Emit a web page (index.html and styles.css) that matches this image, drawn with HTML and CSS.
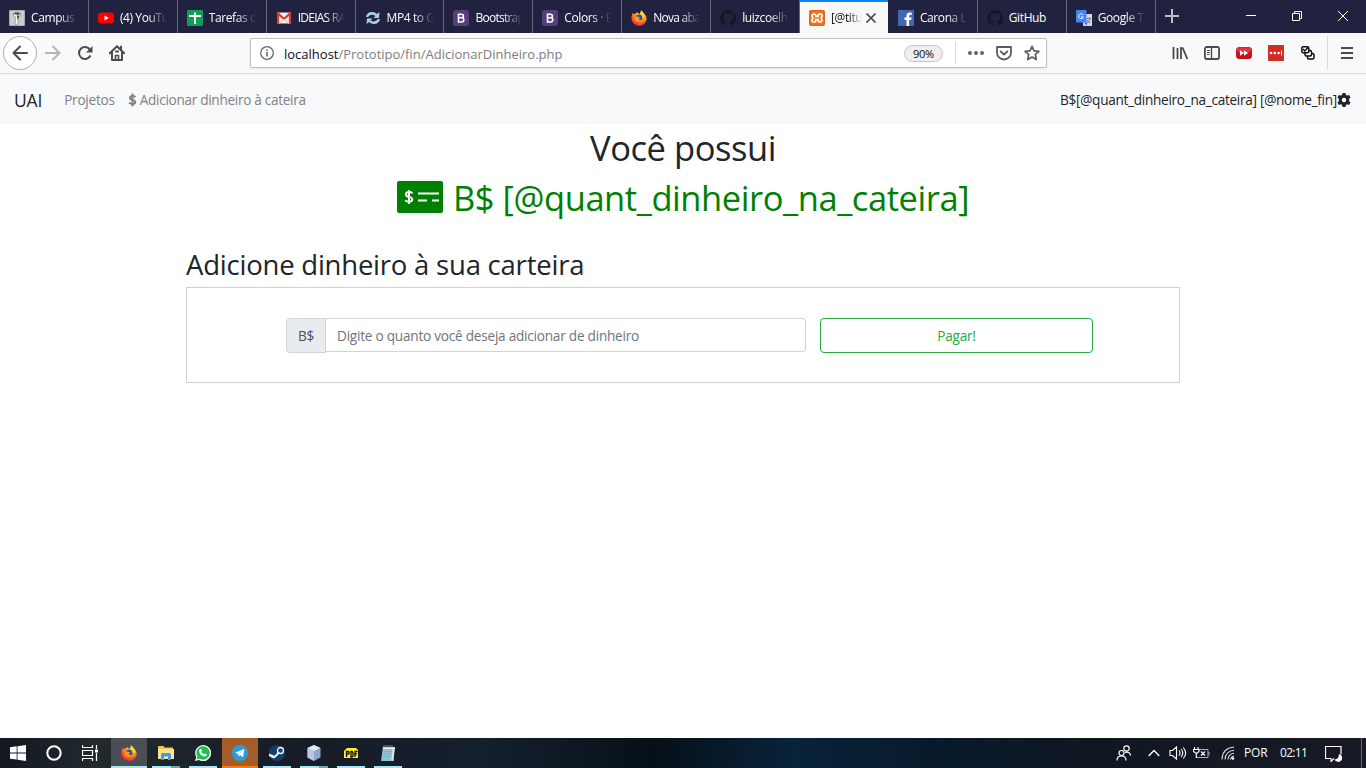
FILE: index.html
```html
<!DOCTYPE html>
<html lang="pt-BR">
<head>
<meta charset="utf-8">
<title>Adicionar dinheiro</title>
<link rel="stylesheet" href="styles.css">
</head>
<body>
<header class="tabs">
  <div class="tab"><svg class="fav" viewBox="0 0 16 16"><rect width="16" height="16" rx="1" fill="#aaa"/><rect x="1" y="1" width="14" height="14" fill="#ccc"/><path d="M4 4q4-3.500 8 0l-1 2-1.500.5-.5 7-2 1.500-1-1 .5-7L4.500 6z" fill="#f4f4f4" stroke="#777" stroke-width=".6"/><path d="M4 4q4-3.500 8 0L8.500 5z" fill="#555"/><path d="M8 5.500h2L8.700 10z" fill="#222"/></svg><span class="tt">Campus</span></div>
  <div class="tab"><svg class="fav" viewBox="0 0 16 16"><rect y="2.500" width="16" height="11" rx="3" fill="#f00"/><path d="M6.500 5.500v5L10.800 8z" fill="#fff"/></svg><span class="tt">(4) YouTu</span></div>
  <div class="tab"><svg class="fav" viewBox="0 0 16 16"><rect width="16" height="16" rx="1" fill="#0f9d58"/><path d="M7 2.500h2V5h5v2H9v7H7V7H2V5h5z" fill="#fff"/></svg><span class="tt">Tarefas d</span></div>
  <div class="tab"><svg class="fav" viewBox="0 0 16 16"><rect x="1.500" y="2.500" width="13" height="11" fill="#eee"/><path d="M2 13.500v-10L8 9l6-5.500v10" fill="none" stroke="#d93a2f" stroke-width="2.200"/><path d="M3.500 13.500 8 9l4.500 4.500" fill="none" stroke="#ccc"/></svg><span class="tt snug">IDEIAS RA</span></div>
  <div class="tab"><svg class="fav" viewBox="0 0 16 16"><path d="M1 7q1-5 6-5 3 0 5 2l2.500-2L14 8H8.500l2-2Q6 3 3 7zM15 9q-1 5-6 5-3 0-5-2l-2.500 2L2 8.500h5.500l-2 2Q10 13 13 9z" fill="#a9cdec"/></svg><span class="tt">MP4 to G</span></div>
  <div class="tab"><svg class="fav" viewBox="0 0 16 16"><use href="#boot"/></svg><span class="tt snug">Bootstrap</span></div>
  <div class="tab"><svg class="fav" viewBox="0 0 16 16"><use href="#boot"/></svg><span class="tt">Colors · B</span></div>
  <div class="tab"><svg class="fav" viewBox="0 0 16 16"><use href="#firefox"/></svg><span class="tt snug">Nova aba</span></div>
  <div class="tab"><svg class="fav" viewBox="0 0 16 16"><use href="#github"/></svg><span class="tt">luizcoelh</span></div>
  <div class="tab active"><svg class="fav" viewBox="0 0 16 16"><rect width="16" height="16" rx="2" fill="#f37623"/><rect x=".8" y=".8" width="14.400" height="14.400" rx="1.500" fill="none" stroke="#d2560c" stroke-width=".6"/><path d="M4.800 4Q7 4 7 6.500h2Q9 4 11.200 4T13 6t-1.500 2q1.500.3 1.500 2t-1.800 2Q9 12 9 9.500H7Q7 12 4.800 12T3 10t1.500-2Q3 7.700 3 6t1.800-2z" fill="none" stroke="#fff" stroke-width="1.700"/></svg><span class="tt">[@titu</span><svg class="close" viewBox="0 0 12 12"><path d="m1.500 1.500 9 9m0-9-9 9" stroke="#444" stroke-width="1.700"/></svg></div>
  <div class="tab"><svg class="fav" viewBox="0 0 16 16"><rect width="16" height="16" fill="#4267b2"/><path d="M8.500 16v-6H6.500V7.600h2V6q0-3.400 3.200-3.400h2V5h-1.300q-1.300 0-1.300 1.300v1.300h2.500L13.200 10h-2.100v6z" fill="#fff"/></svg><span class="tt">Carona L</span></div>
  <div class="tab"><svg class="fav" viewBox="0 0 16 16"><use href="#github"/></svg><span class="tt full">GitHub</span></div>
  <div class="tab last"><svg class="fav" viewBox="0 0 16 16"><rect x="7" y="4" width="9.500" height="12" rx="1" fill="#d5d9dd"/><rect width="10.500" height="12.500" rx="1" fill="#4285f4"/><path d="m8 12.500 2.500 3 1-3z" fill="#3367d6"/><path d="M7.200 5.200A2.400 2.400 0 1 0 7.300 7H5" fill="none" stroke="#fff"/><path d="M10.800 8.500H15M13 7.500v1M14.200 8.500q-.8 3-3 4.500m0-3q1 2 3 3" fill="none" stroke="#62757f" stroke-width=".9"/></svg><span class="tt">Google T</span></div>
  <svg class="plus" viewBox="0 0 14 14"><path d="M7 0v14M0 7h14" stroke="#bbbcc8" stroke-width="2"/></svg>
  <div class="wctl">
    <svg viewBox="0 0 12 12"><path d="M1 5.500h10" stroke="#fff"/></svg>
    <svg viewBox="0 0 12 12"><path d="M3.500 3.500v-2h7v7h-2M1.500 3.500h7v7h-7z" fill="none" stroke="#fff"/></svg>
    <svg viewBox="0 0 12 12"><path d="m1 1 10 10m0-10L1 11" stroke="#fff"/></svg>
  </div>
</header>

<div class="toolbar">
  <span class="back"><svg viewBox="0 0 16 16"><path d="M15 8H1.500M8 1.500 1.500 8 8 14.500" /></svg></span>
  <svg class="ic fwd" viewBox="0 0 16 16"><path d="M0 8h14.500M8 1.500 14.500 8 8 14.500"/></svg>
  <svg class="ic reload" viewBox="0 0 16 16"><path d="M13 4.600A6 6 0 1 0 13.500 10.500" /><path d="M15.500 1v6.500H9z" fill="#4a4a4f" stroke="none"/></svg>
  <svg class="ic home" viewBox="0 0 16 16"><path d="M.8 8.200 8 1.300l7.200 6.900M3 7v8h10V7" /><path d="M6.500 15v-4.500h3V15" stroke-width="1.600"/><path d="M7 6.500h2" /><path d="M12 1.500V5" /></svg>
  <div class="url">
    <svg class="info" viewBox="0 0 14 14"><circle cx="7" cy="7" r="6.300" fill="none" stroke="#666" stroke-width="1.300"/><path d="M7 6v4.500M7 3.500v1.400" stroke="#666" stroke-width="1.600"/></svg>
    <span class="addr"><b>localhost</b>/Prototipo/fin/AdicionarDinheiro.php</span>
    <span class="zoom">90%</span>
    <i class="usep"></i>
    <svg class="dots" viewBox="0 0 16 16"><g fill="#666"><circle cx="2" cy="8" r="2"/><circle cx="8" cy="8" r="2"/><circle cx="14" cy="8" r="2"/></g></svg>
    <svg class="pocket" viewBox="0 0 16 16"><path d="M1 2h14v5.500a7 7 0 0 1-14 0zM4.800 6.500 8 9.600l3.200-3.100" fill="none" stroke="#5c5c5f" stroke-width="1.800" stroke-linecap="round" stroke-linejoin="round"/></svg>
    <svg class="star" viewBox="0 0 16 16"><path d="m8 1.300 2 4.500 4.900.5-3.600 3.300 1 4.900L8 12.100l-4.300 2.400 1-4.900L1.100 6.300 6 5.800z" fill="none" stroke="#5c5c5f" stroke-width="1.700" stroke-linejoin="round"/></svg>
  </div>
  <div class="exts">
    <svg viewBox="0 0 16 16"><path d="M1.500 2v12M5.500 3v11M9 2v12M10.500 2.500 15.300 14" fill="none" stroke="#4a4a4f" stroke-width="1.800"/></svg>
    <svg viewBox="0 0 16 16"><rect x=".9" y="2" width="14.200" height="12" rx="2" fill="none" stroke="#4a4a4f" stroke-width="1.800"/><path d="M7.500 2v12" stroke="#4a4a4f" stroke-width="1.400"/><path d="M3 5.500h3M3 7.500h3M3 9.500h2.500" stroke="#4a4a4f"/></svg>
    <svg viewBox="0 0 16 16"><rect y="2" width="16" height="12" rx="3.500" fill="#c8101c"/><rect x="1" y="2.500" width="14" height="5" rx="2.500" fill="#e03540"/><path d="M4 5.200v5.600L8 8zm4 0v5.600L12 8z" fill="#fff"/></svg>
    <svg viewBox="0 0 16 16"><rect width="16" height="16" rx="1" fill="#d32d27"/><g fill="#fff"><circle cx="3" cy="8" r="1.300"/><circle cx="6.800" cy="8" r="1.300"/><circle cx="10.600" cy="8" r="1.300"/><path d="M13 5.500h1v5h-1z"/></g></svg>
    <svg viewBox="0 0 16 16"><g fill="#fff" stroke="#0c0c0d" stroke-width="1.500"><rect x="7.500" y="8.500" width="6.500" height="5.500" rx="1.500"/><rect x="5" y="5.500" width="6.500" height="5.500" rx="1.500"/><rect x="1.800" y="1.800" width="7" height="6" rx="1.500"/><path d="m3 4 1.800 2L8 2.500" fill="none"/></g></svg>
  </div>
  <svg class="burger" viewBox="0 0 12 12"><path d="M0 1h12M0 6h12M0 11h12" stroke="#4a4a4f" stroke-width="1.800"/></svg>
</div>

<nav class="nav">
  <span class="brand">UAI</span>
  <span class="link">Projetos</span>
  <svg class="dollar" viewBox="0 0 9 14"><use href="#usd"/></svg>
  <span class="link2">Adicionar dinheiro à cateira</span>
  <span class="user">B$[@quant_dinheiro_na_cateira] [@nome_fin]</span>
  <svg class="cog" viewBox="0 0 14 14"><path fill="#212529" fill-rule="evenodd" d="M5.500 0h3l.4 1.900 1.300.7 1.900-.6 1.400 2.500L12.100 6v2l1.400 1.400-1.400 2.500-1.900-.6-1.300.8-.4 1.900h-3l-.4-1.900-1.300-.8-1.900.6L.5 9.400 1.900 8V6L.5 4.500 1.900 2l1.900.6 1.300-.7zM7 4.800a2.200 2.200 0 1 0 0 4.400 2.200 2.200 0 0 0 0-4.400z"/></svg>
</nav>

<main class="page">
  <h1 class="h">Você possui</h1>
  <h1 class="h money"><svg class="check" viewBox="0 0 46 32"><rect width="46" height="32" rx="2" fill="#008000"/><path d="M21 12.500h21M21 19.500h9M35 19.500h7" stroke="#fff" stroke-width="2"/><path d="M15.500 12.200q-1.300-1.200-3.500-1.200-3 0-3 2.200t3 2.700q3.300.5 3.300 2.600t-3.300 2.300q-2.400 0-3.800-1.400M12 9v14" fill="none" stroke="#fff" stroke-width="1.900"/></svg><span>B$ [@quant_dinheiro_na_cateira]</span></h1>
  <h2 class="sub">Adicione dinheiro à sua carteira</h2>
  <form class="box">
    <span class="pre">B$</span>
    <span class="field">Digite o quanto você deseja adicionar de dinheiro</span>
    <span class="btn">Pagar!</span>
  </form>
</main>

<footer class="taskbar">
  <div class="sys">
    <svg viewBox="0 0 16 16"><path d="M0 2.300 6.700 1.300v6.200H0zM7.500 1.200 16 0v7.500H7.500zM0 8.400h6.700v6.200L0 13.700zM7.500 8.400H16V16l-8.500-1.200z" fill="#fff"/></svg>
    <svg viewBox="0 0 16 16"><circle cx="8" cy="8" r="6.700" fill="none" stroke="#fff" stroke-width="2"/></svg>
    <svg viewBox="0 0 16 16"><path d="M.5 0v2.500h10V0M.5 16v-2.500h10V16M.5 5.500h10v5H.5zM14.500 0v4M14.500 8v8" fill="none" stroke="#fff" stroke-width="1.200"/><path d="M13 4.500h3v3h-3z" fill="#fff"/></svg>
  </div>
  <div class="app on"><svg viewBox="0 0 16 16"><use href="#firefox"/></svg></div>
  <div class="app two"><svg viewBox="0 0 16 16"><path d="M0 1h5.500l1 1.500H15V14H0z" fill="#f3c64c"/><path d="M0 4h16v10H0z" fill="#ffe391"/><path d="M3 15V9.500Q3 8 4.500 8h7Q13 8 13 9.500V15h-3v-3.500H6V15z" fill="#3f9fe0"/></svg></div>
  <div class="app"><svg viewBox="0 0 16 16"><path d="M0 16 1.200 12A8 8 0 1 1 4 14.900z" fill="#fff"/><path d="m1.500 14.500.9-3A6.700 6.700 0 1 1 4.500 13.600z" fill="#20bd4f"/><path d="M5.200 3.700 6.400 4l.6 1.800-.7.9q.9 1.900 2.700 2.600l1-.9 1.800.9q0 2.200-2.200 2.200Q4.500 10.500 4 6q0-1.500 1.200-2.300z" fill="#fff"/></svg></div>
  <div class="app tg"><svg viewBox="0 0 16 16"><circle cx="8" cy="8" r="8" fill="#279fda"/><path d="m3 7.800 9.500-3.700L11 12.200 8 10.100l-1.500 1.500-.4-2.700z" fill="#fff"/><path d="m6.100 8.900 5-3.600-3.900 4.100-.7 2.200z" fill="#b9d8ea"/></svg></div>
  <div class="app"><svg viewBox="0 0 16 16"><circle cx="8" cy="8" r="8" fill="#11406f"/><path d="M0 8.500 5.500 10.700 8 8l2-3.500L12 7 6.500 12.500l-2 1L0 11z" fill="#e8eef4"/><circle cx="11.500" cy="5.500" r="3" fill="#1c4270" stroke="#fff" stroke-width="1.300"/></svg></div>
  <div class="app two"><svg viewBox="0 0 16 16"><path d="m8 0 6.500 3v9.500L8 16l-6.500-3.500V3z" fill="#8fa6ca"/><path d="m8 0 6.500 3L8 6 1.500 3z" fill="#e0eaf6"/><path d="M1.500 3 8 6v10l-6.500-3.500z" fill="#b7c9e3"/></svg></div>
  <div class="app"><svg viewBox="0 0 16 16"><path d="M4 3h9l2 2v8H1V6z" fill="#ffef20"/><path d="M3.500 12V6.500h1.700q1 0 1 1.200T5.200 9H3.500M8 6.500V12h1l1-1V7.500l-1-1zM12 12V6.500h2.500M12 9h2" fill="none" stroke="#111" stroke-width="1.300"/></svg></div>
  <div class="app"><svg viewBox="0 0 16 16"><path d="M3 2h12l-1.500 14H1z" fill="#8cc3cf"/><path d="M3 2h12l-.3 2H2.700z" fill="#eee"/><path d="M4 0v3M6 0v3M8 0v3M10 0v3M12 0v3" stroke="#999" stroke-width=".8"/><path d="m13.500 4-1.200 12" stroke="#d9e6e4" stroke-width="2"/><path d="M4 6.500h7M4 9h7M3.500 11.500h7" stroke="#74acb9" stroke-width=".7"/></svg></div>
  <div class="tray">
    <svg class="people" viewBox="0 0 16 16"><g fill="none" stroke="#fff" stroke-width="1.200"><circle cx="5.500" cy="8" r="2.500"/><path d="M1 15.500q0-4.500 4.500-4.500t4.500 4.500"/><circle cx="10.500" cy="3.500" r="2.700"/><path d="M9 7.500q4.500-1.500 5.700 3"/></g></svg>
    <svg class="chev" viewBox="0 0 12 8"><path d="m.7 7 5.300-5.500L11.300 7" fill="none" stroke="#fff" stroke-width="1.300"/></svg>
    <svg class="vol" viewBox="0 0 18 16"><path d="M1 5.500h2.500L7.500 2v12l-4-3.500H1zM10 5.500q2 2.500 0 5M12 4q3.500 4 0 8M14.200 2.500q5 5.500 0 11" fill="none" stroke="#fff" stroke-width="1.100"/></svg>
    <svg class="bat" viewBox="0 0 17 12"><path d="M5 2.500h10v8H3.500V7M16 5v3" fill="none" stroke="#aaa"/><path d="M1.500 0v2.500M5 0v2.500M.5 2.500H6v2L4.500 6h-2L.5 4.500zM3.300 6v5M8 4.500l4 4m0-4-4 4" fill="none" stroke="#fff" stroke-width="1.100"/></svg>
    <svg class="wifi" viewBox="0 0 14 14"><path d="M1 13.500Q1.500 2 13 1M4 13.500Q4.500 5 13 4.200M7 13.500q.5-5.500 6-6.200M9.500 13.500q.5-3 3.500-3.300" fill="none" stroke="#ddd" stroke-width="1.100"/><circle cx="12" cy="12.500" r="1.300" fill="#fff"/></svg>
    <span class="por">POR</span>
    <span class="clk">02:11</span>
    <svg class="act" viewBox="0 0 17 17"><path d="M9 13.500 6 16.500v-3H.5V1.500h15.500v8" fill="none" stroke="#fff" stroke-width="1.200"/><path d="M14 9a4 4 0 1 1-4.500 5.500Q14 14 14 9z" fill="#fff"/></svg>
    <i class="peek"></i>
  </div>
</footer>

<svg class="defs" width="0" height="0">
  <defs>
    <radialGradient id="ffo" cx=".65" cy=".2" r=".9"><stop offset="0" stop-color="#fff14a"/><stop offset=".4" stop-color="#ffa616"/><stop offset=".75" stop-color="#ff4a2c"/><stop offset="1" stop-color="#e6176e"/></radialGradient>
    <g id="firefox"><path d="M10 .3Q12 1.500 13 3.500q3 2.500 2.700 6A7.700 7.500 0 0 1 .4 8.500Q.3 5.500 1.700 2.800l1 1.200L5 3.500 6 2q1 1.500 3 2z" fill="url(#ffo)"/><circle cx="8" cy="8" r="3.500" fill="#2b4bb0"/><path d="M4.200 6.500Q6 6 7.500 7L9.500 7.500 7.500 9q1.500 1.500 4 .5-1.500 3-4.500 2.500T3.500 9z" fill="#ff9a1a"/><path d="M8.500 3.500Q12 5 11.800 8.500L13.500 7 12 3z" fill="#ffd429"/></g>
    <g id="boot"><rect width="16" height="16" rx="2.500" fill="#563d7c"/><path d="M5.500 4.200h3q1.900 0 1.900 1.800T8.500 7.800h-3zm0 3.600h3.300q2 0 2 2T8.800 12H5.500z" fill="none" stroke="#fff" stroke-width="1.600"/></g>
    <path id="github" fill="#15161f" d="M8 .2a8 8 0 0 0-2.500 15.500c.4.100.6-.2.600-.5v-1.700c-2.400.5-2.800-1-2.800-1-.4-1-.9-1.200-.9-1.200-.8-.6 0-.6 0-.6.900.1 1.400.9 1.400.9.700 1.300 1.900.9 2.400.7 0-.5.300-.9.500-1.100C4.900 11 3.100 10.300 3.100 7.300c0-.9.300-1.600.8-2.100 0-.3-.3-1.100.1-2.200 0 0 .7-.2 2.200.8a7.500 7.500 0 0 1 4 0c1.500-1 2.200-.8 2.200-.8.400 1.100.1 1.900.1 2.200.5.500.8 1.200.8 2.100 0 3-1.900 3.700-3.700 3.900.3.300.6.800.6 1.500v2.500c0 .3.200.6.600.5A8 8 0 0 0 8 .2z"/>
    <path id="usd" d="M7.500 4Q6.500 3 4.500 3 2 3 2 4.700t2.500 2.200Q7.200 7.400 7.200 9.300T4.500 11Q2.300 11 1 9.800M4.500.5v13" fill="none" stroke="#808183" stroke-width="1.900"/>
  </defs>
</svg>
</body>
</html>
```
FILE: styles.css
```css
* { box-sizing: border-box; }
body {
  margin: 0; width: 1366px; height: 768px; overflow: hidden;
  display: flex; flex-direction: column; background: #fff;
  font-family: "Open Sans", "Noto Sans", sans-serif; font-size: 13.6px; letter-spacing: -.23px; color: #212529;
}
svg { display: block; flex: none; }
.defs { position: absolute; }

.tabs { height: 33px; flex: none; display: flex; background: #20223f; }
.tab {
  width: 88.9px; flex: none; display: flex; align-items: center; padding: 2px 0 0 9px;
  border-right: 1px solid #65667a; color: #fff;
}
.fav { width: 16px; height: 16px; margin-right: 6px; }
.tt {
  width: 47px; overflow: hidden; white-space: nowrap; font-size: 12px; letter-spacing: -.4px; line-height: 18px;
  -webkit-mask-image: linear-gradient(90deg, #000 58%, transparent); mask-image: linear-gradient(90deg, #000 58%, transparent);
}
.tt.snug { letter-spacing: -.75px; }
.tt.full { -webkit-mask-image: none; mask-image: none; }
.tab.active { width: 88px; margin-right: .9px; background: #f9f9fa; color: #0c0c0d; border-right: 0; border-top: 2px solid #0a84ff; padding-top: 0; }
.tab.active .tt { width: 31px; }
.close { width: 12px; height: 12px; margin-left: 3px; }
.plus { width: 14px; height: 14px; margin: 9px 0 0 9px; }
.wctl { margin-left: auto; display: flex; gap: 34px; padding: 10px 17px 0 0; }
.wctl svg { width: 12px; height: 12px; }

.toolbar { height: 41px; flex: none; display: flex; align-items: center; background: #f9f9fa; border-bottom: 1px solid #dcdcdd; }
.back { width: 34px; height: 34px; margin-left: 3px; border: 1px solid #b1b1b3; border-radius: 50%; background: #fff; display: grid; place-items: center; }
.back svg, .ic { width: 16px; height: 16px; fill: none; stroke: #4a4a4f; stroke-width: 2; stroke-linejoin: round; stroke-linecap: round; }
.ic.fwd { margin-left: 8px; stroke: #b4b4b6; }
.ic.reload { margin-left: 16px; stroke-linecap: butt; }
.ic.home { margin-left: 16px; }
.url { width: 797px; height: 30px; margin-left: 125px; border: 1px solid #bfbfc0; border-radius: 2px; background: #fff; display: flex; align-items: center; box-shadow: 0 1px 3px rgba(0,0,0,.08); }
.info { width: 14px; height: 14px; margin-left: 9px; }
.addr { margin: 2px 0 0 10px; color: #7d7d80; font-size: 13px; letter-spacing: 0; }
.addr b { font-weight: 400; color: #0c0c0d; }
.zoom { margin-left: auto; width: 39px; height: 17px; border: 1px solid #c8c8ca; border-radius: 9px; background: #efeff0; font-size: 11px; line-height: 15px; text-align: center; color: #0c0c0d; }
.usep { width: 1px; height: 22px; background: #dcdcdd; margin-left: 12px; }
.dots, .pocket, .star { width: 16px; height: 16px; margin-left: 12px; }
.star { margin-right: 6px; }
.exts { margin-left: 125px; display: flex; gap: 16px; align-items: center; height: 34px; padding-right: 11px; border-right: 1px solid #dcdcdd; }
.exts svg { width: 16px; height: 16px; }
.burger { width: 12px; height: 12px; margin-left: 13px; }

.nav { height: 50px; flex: none; display: flex; align-items: center; background: #f8f9fa; padding: 1px 15px 0 14px; }
.brand { font-size: 17.500px; letter-spacing: -.2px; }
.link, .link2 { color: #808183; }
.link { margin-left: 22px; }
.dollar { width: 9px; height: 14px; margin-left: 13px; }
.link2 { margin-left: 3px; letter-spacing: -.3px; }
.user { margin-left: auto; letter-spacing: -.28px; }
.cog { width: 14px; height: 14px; }

.page { flex: 1; display: flex; flex-direction: column; padding: 0 186px; }
.h { margin: 0; height: 50px; line-height: 48px; font-size: 34.500px; letter-spacing: -.45px; font-weight: 400; display: flex; justify-content: center; }
.money { color: #008000; align-items: flex-start; letter-spacing: -.43px; }
.check { width: 46px; height: 32px; margin: 7px 10px 0 0; }
.sub { margin: 22px 0 0; height: 41px; line-height: 38px; font-size: 27.500px; letter-spacing: -.22px; font-weight: 400; }
.box { width: 994px; height: 96px; border: 1px solid #cfd0d1; display: flex; align-items: flex-start; padding: 30px 86px 0 99px; }
.pre { width: 40px; height: 35px; border: 1px solid #ced4da; background: #e9ecef; border-radius: 4px 0 0 4px; color: #495057; text-align: center; line-height: 34px; }
.field { width: 480px; height: 34px; border: 1px solid #ced4da; border-left: 0; border-radius: 0 4px 4px 0; color: #6c757d; line-height: 34px; padding-left: 11px; }
.btn { width: 273px; height: 35px; margin-left: 14px; border: 1px solid #28a745; border-radius: 4px; color: #28a745; text-align: center; line-height: 34px; }

.taskbar { height: 30px; flex: none; display: flex; background: linear-gradient(90deg, #131720, #222a2e 7%, #171c26 20%, #14202c 35%, #061018 48%, #08233a 58%, #071a2b 68%, #101722 80%, #171a25); }
.sys { display: flex; align-items: center; padding-left: 10px; gap: 20px; width: 111px; }
.sys svg { width: 16px; height: 16px; }
.app { width: 36px; margin-right: 1px; display: flex; justify-content: center; padding-top: 7px; position: relative; }
.app svg { width: 16px; height: 16px; }
.app::after { content: ""; position: absolute; left: 4px; width: 28px; bottom: 0; height: 2px; background: #a5e8f5; }
.app.two::after { background: linear-gradient(90deg, #a5e8f5 19px, #72a5b0 19px); }
.app.on { background: #4b4e53; }
.app.on::after, .app.tg::after { left: 0; width: 36px; }
.app.tg { background: #a35c2a; }
.app.tg::after { background: #ff7a00; }
.tray { margin-left: auto; display: flex; align-items: center; color: #fff; font-size: 12px; letter-spacing: -.2px; }
.people { width: 16px; height: 16px; margin-right: 16px; }
.chev { width: 12px; height: 8px; margin-right: 9px; }
.vol { width: 18px; height: 16px; margin-right: 6px; }
.bat { width: 17px; height: 12px; margin-right: 11px; }
.wifi { width: 14px; height: 14px; margin-right: 9px; }
.por { width: 36px; margin-top: -2px; }
.clk { width: 45px; margin-top: -2px; letter-spacing: -.7px; }
.act { width: 17px; height: 17px; margin-right: 19px; }
.peek { width: 1px; height: 30px; background: #666a70; margin-right: 4px; }
```
